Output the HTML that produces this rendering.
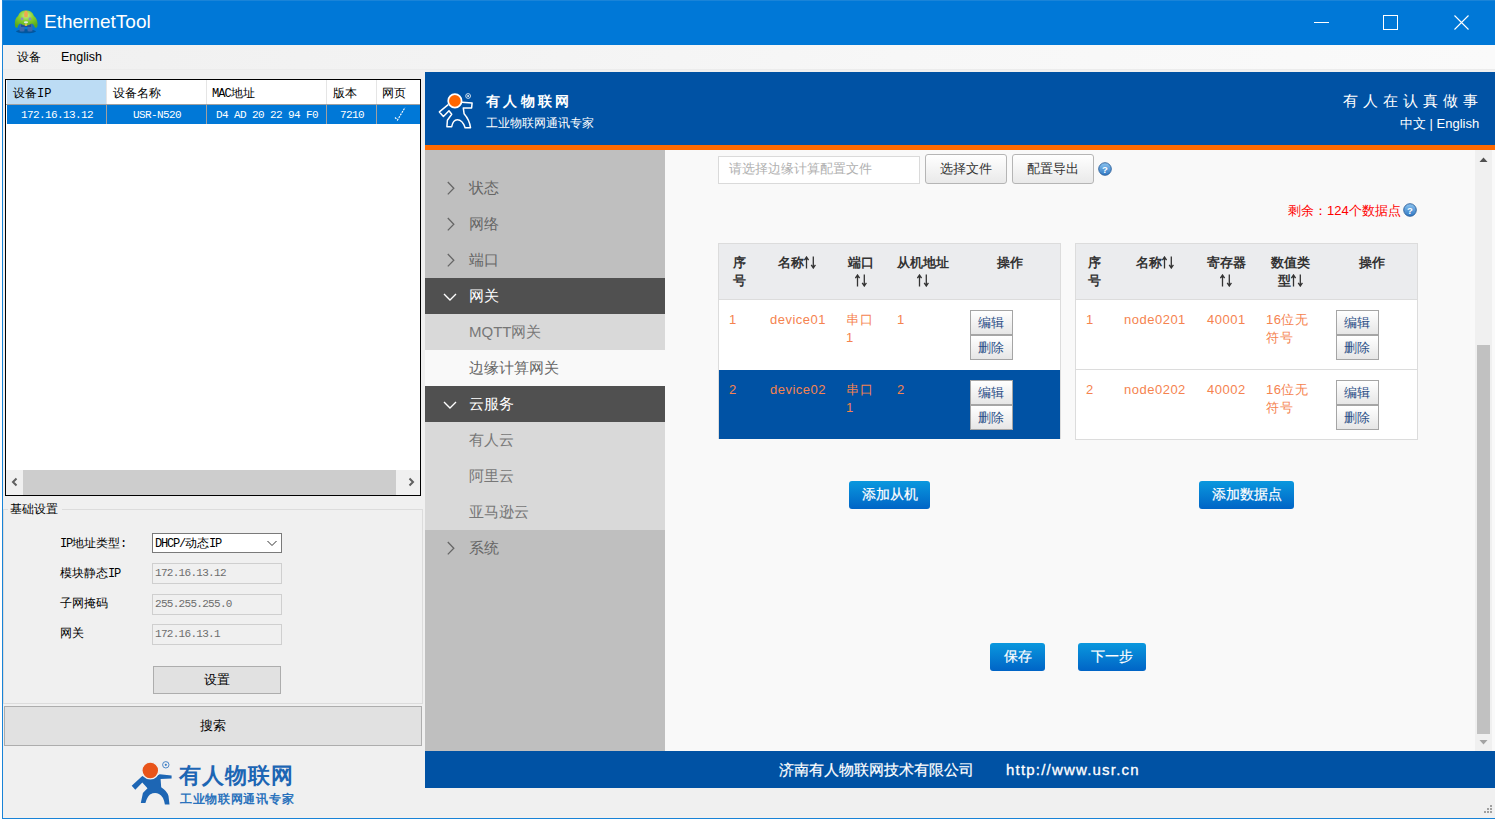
<!DOCTYPE html>
<html><head><meta charset="utf-8">
<style>
*{margin:0;padding:0;box-sizing:border-box}
html,body{width:1495px;height:820px;overflow:hidden;background:#fff;font-family:"Liberation Sans",sans-serif}
.a{position:absolute}
.t{position:absolute;white-space:nowrap}
#win{position:absolute;left:2px;top:0;width:1493px;height:819px;background:#f0f0f0;border-left:1px solid #1883d7;border-bottom:1px solid #1883d7}
#title{position:absolute;left:2px;top:0;width:1493px;height:45px;background:#0078d7;border-top:1px solid #1a84d8;border-left:1px solid #1a84d8}
#menu{position:absolute;left:3px;top:45px;width:1492px;height:25px;background:linear-gradient(90deg,#f0f0f0 0%,#f3f3f3 30%,#f7f7f7 60%,#fafafa 100%);border-bottom:1px solid #ececec}
.mono{font-family:"Liberation Mono",monospace}
#list{position:absolute;left:5px;top:79px;width:416px;height:417px;border:1px solid #000;background:#fff}
.hd{position:absolute;top:1px;height:24px;font-size:12px;line-height:24px;color:#000;white-space:nowrap}
.sep{position:absolute;top:0;width:1px;height:24px;background:#e5e5e5}
.rw{position:absolute;top:26px;height:19px;color:#fff;font-size:11px;letter-spacing:-.6px;line-height:19px;text-align:center;font-family:"Liberation Mono",monospace;white-space:nowrap}
#hdr{position:absolute;left:425px;top:72px;width:1070px;height:73px;background:#0052a4}
#orange{position:absolute;left:425px;top:145px;width:1070px;height:5px;background:#ff6a00}
#side{position:absolute;left:425px;top:150px;width:240px;height:601px;background:#bfbfbf}
#content{position:absolute;left:665px;top:150px;width:830px;height:601px;background:#f9f9f9}
#footer{position:absolute;left:425px;top:751px;width:1070px;height:37px;background:#0052a4}
.mi{position:absolute;left:425px;width:240px;height:36px;font-size:15px;line-height:36px;color:#666;white-space:nowrap}
.mi .txt{position:absolute;left:44px;top:0}
.mi.dark{background:#505050;color:#fff}
.mi.sub{background:#d9d9d9;color:#777}
.mi.sel{background:#f9f9f9;color:#666}
.mi svg{position:absolute;left:0;top:0}
.btnw{position:absolute;border:1px solid #b5b5b5;border-radius:3px;background:linear-gradient(#ffffff,#e9e9e9);font-size:13px;color:#333;text-align:center;white-space:nowrap}
.bluebtn{position:absolute;border-radius:3px;background:linear-gradient(#0a98de,#0064c6);color:#fff;font-size:13.5px;-webkit-text-stroke:.2px #fff;text-align:center;white-space:nowrap}
.tbl{position:absolute;border:1px solid #dcdcdc;background:#fff}
.th{position:absolute;font-size:13px;font-weight:bold;color:#333;line-height:18px;white-space:nowrap}
.td{position:absolute;font-size:13px;color:#f5834f;line-height:18px;margin-top:1px;letter-spacing:.5px;white-space:nowrap}
.eb{position:absolute;width:43px;height:25px;border:1px solid #a5a5a5;background:linear-gradient(#ffffff,#e6e6e6);font-size:13px;color:#2b4f87;text-align:center;line-height:23px;padding-right:2px;white-space:nowrap}
.lbl{position:absolute;font-size:12px;line-height:16px;color:#000;white-space:nowrap}
.lbl .mono,.cmb .mono{letter-spacing:-1.2px}
.tb{position:absolute;left:152px;width:130px;height:21px;border:1px solid #cfcfcf;background:#f0f0f0;font-family:"Liberation Mono",monospace;font-size:11px;letter-spacing:-.7px;color:#6d6d6d;line-height:19px;padding-left:2px;white-space:nowrap}
.wbtn{position:absolute;border:1px solid #adadad;background:#e1e1e1;font-size:13px;color:#000;text-align:center;white-space:nowrap}
.arr{display:inline-block;vertical-align:-2px}
</style></head><body>
<div id="win"></div>
<div id="title"></div>
<!-- title icon -->
<svg class="a" style="left:0;top:0" width="44" height="40" viewBox="0 0 44 40">
  <defs><radialGradient id="g1" cx="50%" cy="30%" r="70%"><stop offset="0" stop-color="#c8f090"/><stop offset=".45" stop-color="#86d030"/><stop offset="1" stop-color="#58a81c"/></radialGradient><filter id="bl"><feGaussianBlur stdDeviation=".45"/></filter></defs>
  <g filter="url(#bl)">
  <ellipse cx="26" cy="31.3" rx="10" ry="2" fill="#0a3f7a" opacity=".6"/>
  <rect x="19.5" y="22" width="5" height="9.5" rx="1.5" fill="#3a6aae"/>
  <rect x="27.5" y="22" width="5" height="9.5" rx="1.5" fill="#3a6aae"/>
  <rect x="21" y="21" width="10" height="6" fill="#24509a"/>
  <path d="M15 26 Q14 19 18 16 Q20 10.5 26 10.3 Q32 10.5 34 16 Q38 19 37.5 26 Q37 28.5 35 27.5 Q33.5 24 32 23.5 Q29 25.5 26 25.5 Q23 25.5 20 23.5 Q18.5 24 17.5 27.5 Q15.5 28.5 15 26Z" fill="url(#g1)"/>
  <path d="M24.9 11 L27.1 11 Q28.6 14 27.6 17.2 L24.4 17.2 Q23.4 14 24.9 11Z" fill="#f0a850"/>
  <circle cx="22" cy="19" r="1.4" fill="#8890c0"/><circle cx="30" cy="19" r="1.4" fill="#8890c0"/>
  <ellipse cx="26" cy="22.3" rx="2.2" ry="1.1" fill="#e0e8dc"/>
  <ellipse cx="26" cy="25" rx="1.3" ry="1" fill="#e8c040"/>
  </g>
</svg>
<div class="t" id="ttl" style="left:44px;top:10px;font-size:19px;color:#fff;line-height:24px">EthernetTool</div>
<!-- window buttons -->
<svg class="a" style="left:1300px;top:0" width="195" height="45" viewBox="0 0 195 45">
  <rect x="14" y="22" width="15" height="1" fill="#fff"/>
  <rect x="83.5" y="15.5" width="14" height="14" fill="none" stroke="#fff" stroke-width="1"/>
  <path d="M154.5 15.5 L168.5 29.5 M168.5 15.5 L154.5 29.5" stroke="#fff" stroke-width="1.1"/>
</svg>
<div id="menu"></div>
<div class="t" style="left:17px;top:48px;font-size:12px;line-height:18px;color:#000">设备</div>
<div class="t" id="eng" style="left:61px;top:48px;font-size:12.5px;line-height:18px;color:#000">English</div>

<!-- list view -->
<div id="list">
  <div class="a" style="left:1px;top:0;width:100px;height:24px;background:#bcdcf4"></div>
  <div class="hd" style="left:7px">设备<span class="mono" style="font-size:12px">IP</span></div>
  <div class="sep" style="left:100px"></div>
  <div class="hd" style="left:107px">设备名称</div>
  <div class="sep" style="left:200px"></div>
  <div class="hd" style="left:206px"><span class="mono" style="font-size:12px;letter-spacing:-1px">MAC</span>地址</div>
  <div class="sep" style="left:320px"></div>
  <div class="hd" style="left:327px">版本</div>
  <div class="sep" style="left:370px"></div>
  <div class="hd" style="left:376px">网页</div>
  <div class="a" style="left:0;top:24px;width:414px;height:1px;background:#a0a0a0"></div>
  <div class="a" style="left:1px;top:25px;width:413px;height:19px;background:#0078d7"></div>
  <div class="rw" style="left:1px;width:100px">172.16.13.12</div>
  <div class="a" style="left:100px;top:25px;width:1px;height:19px;background:#a0a0a0"></div>
  <div class="rw" style="left:101px;width:100px">USR-N520</div>
  <div class="a" style="left:200px;top:25px;width:1px;height:19px;background:#a0a0a0"></div>
  <div class="rw" style="left:201px;width:120px">D4 AD 20 22 94 F0</div>
  <div class="a" style="left:320px;top:25px;width:1px;height:19px;background:#a0a0a0"></div>
  <div class="rw" style="left:321px;width:50px">7210</div>
  <div class="a" style="left:370px;top:25px;width:1px;height:19px;background:#a0a0a0"></div>
  <svg class="a" style="left:388px;top:26px" width="14" height="16" viewBox="0 0 14 16"><path d="M1 11.5 L3.5 14 L11 1.5" fill="none" stroke="#fff" stroke-width="1.1" stroke-dasharray="2 1"/></svg>
  <!-- h scrollbar -->
  <div class="a" style="left:0;top:390px;width:414px;height:25px;background:#f0f0f0"></div>
  <div class="a" style="left:17px;top:390px;width:373px;height:25px;background:#cdcdcd"></div>
  <svg class="a" style="left:4px;top:397px" width="10" height="10" viewBox="0 0 10 10"><path d="M6.5 1.5 L3 5 L6.5 8.5" fill="none" stroke="#606060" stroke-width="2"/></svg>
  <svg class="a" style="left:400px;top:397px" width="10" height="10" viewBox="0 0 10 10"><path d="M3.5 1.5 L7 5 L3.5 8.5" fill="none" stroke="#606060" stroke-width="2"/></svg>
</div>
<!-- group box -->
<div class="a" style="left:3px;top:509px;width:420px;height:195px;border:1px solid #dcdcdc;border-top-color:#dcdcdc"></div>
<div class="a" style="left:8px;top:503px;width:54px;height:12px;background:#f0f0f0"></div>
<div class="lbl" id="jc" style="left:10px;top:501px;font-size:12px">基础设置</div>
<div class="lbl" style="left:60px;top:535px"><span class="mono">IP</span>地址类型<span class="mono">:</span></div>
<div class="lbl" style="left:60px;top:565px">模块静态<span class="mono">IP</span></div>
<div class="lbl" style="left:60px;top:595px">子网掩码</div>
<div class="lbl" style="left:60px;top:625px">网关</div>
<div class="a" style="left:152px;top:533px;width:130px;height:20px;border:1px solid #7a7a7a;background:#fff"></div>
<div class="t cmb" style="left:155px;top:535px;font-size:12px;line-height:16px;color:#000"><span class="mono">DHCP/</span>动态<span class="mono">IP</span></div>
<svg class="a" style="left:266px;top:538px" width="12" height="10" viewBox="0 0 12 10"><path d="M1.5 3 L6 7.5 L10.5 3" fill="none" stroke="#333" stroke-width="1"/></svg>
<div class="tb" style="top:563px">172.16.13.12</div>
<div class="tb" style="top:594px">255.255.255.0</div>
<div class="tb" style="top:624px">172.16.13.1</div>
<div class="wbtn" style="left:153px;top:666px;width:128px;height:28px;line-height:26px">设置</div>
<div class="wbtn" style="left:4px;top:706px;width:418px;height:40px;line-height:38px">搜索</div>
<!-- bottom-left logo -->
<svg class="a" style="left:128px;top:758px" width="50" height="50" viewBox="0 0 50 50">
  <path d="M3.7 27.7 L14.3 18 Q22 22 31.7 16.2 L43.6 17.4 L43.6 20.4 L32.6 21 L33.2 29.3 Q39 33 40.5 38 L41.5 46.6 L36.9 46.6 Q35.5 38 31 36 Q26.8 34 22 36.5 Q19 39 17.4 45.1 L12.8 45.1 L14.9 35.1 L19.5 30.2 L14.3 24.4 L7.3 31.7 Z" fill="#1d66b4"/>
  <circle cx="22.3" cy="12.5" r="8.4" fill="#e8541a" stroke="#f0f0f0" stroke-width="1.3"/>
  <circle cx="37.8" cy="6.8" r="3.2" fill="none" stroke="#3a7cc4" stroke-width=".9"/>
  <circle cx="37.8" cy="6.8" r="1.1" fill="#3a7cc4"/>
</svg>
<div class="t" id="lg1" style="left:179px;top:762px;font-size:22px;font-weight:bold;color:#1d66b4;line-height:28px;letter-spacing:1px">有人物联网</div>
<div class="t" id="lg2" style="left:180px;top:791px;font-size:12px;font-weight:bold;color:#2a72bc;line-height:16px;letter-spacing:.7px">工业物联网通讯专家</div>
<div id="hdr"></div>
<div id="orange"></div>
<div id="side"></div>
<div id="content"></div>
<div id="footer"></div>
<!-- header logo -->
<svg class="a" style="left:434px;top:88px" width="40" height="44" viewBox="0 0 40 44">
  <path d="M14.2 16.6 L5.4 23.9 L9.4 28.5 L15 22.8 L17.7 26.3 L13.4 32.2 L12.9 38.7 L17.7 38.7 Q19 31.7 23.3 31.7 Q28.5 31.7 31.1 39.7 L36.5 39.7 Q35.5 32 30.1 25.8 L29.3 19.9 L37.6 19.9 L38.1 15 L27.9 14.2" fill="none" stroke="#fff" stroke-width="1.5" stroke-linejoin="round"/>
  <circle cx="20.9" cy="12.9" r="6.7" fill="#ff6600" stroke="#fff" stroke-width="1.7"/>
  <circle cx="34.1" cy="8" r="2.4" fill="none" stroke="#fff" stroke-width=".8"/>
  <circle cx="34.1" cy="8" r=".9" fill="#fff"/>
</svg>
<div class="t" id="h1" style="left:486px;top:92px;font-size:14px;font-weight:bold;color:#fff;line-height:18px;letter-spacing:3.3px">有人物联网</div>
<div class="t" id="h2" style="left:486px;top:115px;font-size:12px;color:#fff;line-height:16px">工业物联网通讯专家</div>
<div class="t" id="h3" style="left:1343px;top:92px;font-size:15px;color:#fff;line-height:18px;letter-spacing:5px">有人在认真做事</div>
<div class="t" id="h4" style="left:1400px;top:116px;font-size:13px;color:#fff;line-height:16px">中文 | English</div>
<!-- sidebar menu -->
<div class="mi" style="top:170px"><svg width="30" height="36"><path d="M22.8 12 L28.8 18.2 L22.8 24.4" fill="none" stroke="#666" stroke-width="1.3"/></svg><span class="txt">状态</span></div>
<div class="mi" style="top:206px"><svg width="30" height="36"><path d="M22.8 12 L28.8 18.2 L22.8 24.4" fill="none" stroke="#666" stroke-width="1.3"/></svg><span class="txt">网络</span></div>
<div class="mi" style="top:242px"><svg width="30" height="36"><path d="M22.8 12 L28.8 18.2 L22.8 24.4" fill="none" stroke="#666" stroke-width="1.3"/></svg><span class="txt">端口</span></div>
<div class="mi dark" style="top:278px"><svg width="40" height="36"><path d="M19 16 L25 22 L31 16" fill="none" stroke="#fff" stroke-width="1.4"/></svg><span class="txt">网关</span></div>
<div class="mi sub" style="top:314px"><span class="txt">MQTT网关</span></div>
<div class="mi sel" style="top:350px"><span class="txt">边缘计算网关</span></div>
<div class="mi dark" style="top:386px"><svg width="40" height="36"><path d="M19 16 L25 22 L31 16" fill="none" stroke="#fff" stroke-width="1.4"/></svg><span class="txt">云服务</span></div>
<div class="mi sub" style="top:422px"><span class="txt">有人云</span></div>
<div class="mi sub" style="top:458px"><span class="txt">阿里云</span></div>
<div class="mi sub" style="top:494px"><span class="txt">亚马逊云</span></div>
<div class="mi" style="top:530px"><svg width="30" height="36"><path d="M22.8 12 L28.8 18.2 L22.8 24.4" fill="none" stroke="#666" stroke-width="1.3"/></svg><span class="txt">系统</span></div>
<!-- content top controls -->
<div class="a" style="left:718px;top:156px;width:202px;height:28px;border:1px solid #dadada;background:#fff"></div>
<div class="t" id="ph" style="left:729px;top:160px;font-size:13px;line-height:17px;color:#b0b0b0">请选择边缘计算配置文件</div>
<div class="btnw" style="left:925px;top:154px;width:82px;height:30px;line-height:27px">选择文件</div>
<div class="btnw" style="left:1012px;top:154px;width:82px;height:30px;line-height:27px">配置导出</div>
<svg class="a" style="left:1098px;top:162px" width="14" height="14" viewBox="0 0 14 14"><defs><linearGradient id="qg" x1="0" y1="0" x2="0" y2="1"><stop offset="0" stop-color="#8cc4f0"/><stop offset="1" stop-color="#2f78c4"/></linearGradient></defs><circle cx="7" cy="7" r="6.3" fill="url(#qg)" stroke="#2d5f99" stroke-width=".9"/><text x="7" y="10.6" font-size="9.5" font-weight="bold" text-anchor="middle" fill="#fff" font-family="Liberation Sans">?</text></svg>
<div class="t" id="rem" style="left:1288px;top:202px;font-size:13px;line-height:17px;color:#ff0000">剩余：124个数据点</div>
<svg class="a" style="left:1403px;top:203px" width="14" height="14" viewBox="0 0 14 14"><circle cx="7" cy="7" r="6.3" fill="url(#qg)" stroke="#2d5f99" stroke-width=".9"/><text x="7" y="10.6" font-size="9.5" font-weight="bold" text-anchor="middle" fill="#fff" font-family="Liberation Sans">?</text></svg>

<!-- left table -->
<div class="tbl" style="left:718px;top:243px;width:343px;height:196px"></div>
<div class="a" style="left:719px;top:244px;width:341px;height:56px;background:#ebecee;border-bottom:1px solid #dcdcdc"></div>
<div class="th" style="left:733px;top:254px">序<br>号</div>
<div class="th" style="left:778px;top:254px">名称<svg class="arr" width="13" height="13" viewBox="0 0 13 13"><path d="M2.5 1.5V12.5M0.4 4.2L2.5 1L4.6 4.2M9.3 0.5V11.5M7.2 8.8L9.3 12L11.4 8.8" fill="none" stroke="#333" stroke-width="1.3"/></svg></div>
<div class="th" style="left:848px;top:254px;text-align:center">端口<br><svg class="arr" width="13" height="13" viewBox="0 0 13 13"><path d="M2.5 1.5V12.5M0.4 4.2L2.5 1L4.6 4.2M9.3 0.5V11.5M7.2 8.8L9.3 12L11.4 8.8" fill="none" stroke="#333" stroke-width="1.3"/></svg></div>
<div class="th" style="left:897px;top:254px;text-align:center">从机地址<br><svg class="arr" width="13" height="13" viewBox="0 0 13 13"><path d="M2.5 1.5V12.5M0.4 4.2L2.5 1L4.6 4.2M9.3 0.5V11.5M7.2 8.8L9.3 12L11.4 8.8" fill="none" stroke="#333" stroke-width="1.3"/></svg></div>
<div class="th" style="left:997px;top:254px">操作</div>
<div class="a" style="left:719px;top:370px;width:341px;height:69px;background:#0052a4"></div>
<div class="td" style="left:729px;top:310px">1</div>
<div class="td" style="left:770px;top:310px">device01</div>
<div class="td" style="left:846px;top:310px">串口<br>1</div>
<div class="td" style="left:897px;top:310px">1</div>
<div class="eb" style="left:970px;top:310px">编辑</div>
<div class="eb" style="left:970px;top:335px">删除</div>
<div class="td" style="left:729px;top:380px">2</div>
<div class="td" style="left:770px;top:380px">device02</div>
<div class="td" style="left:846px;top:380px">串口<br>1</div>
<div class="td" style="left:897px;top:380px">2</div>
<div class="eb" style="left:970px;top:380px">编辑</div>
<div class="eb" style="left:970px;top:405px">删除</div>

<!-- right table -->
<div class="tbl" style="left:1075px;top:243px;width:343px;height:197px"></div>
<div class="a" style="left:1076px;top:244px;width:341px;height:56px;background:#ebecee;border-bottom:1px solid #dcdcdc"></div>
<div class="th" style="left:1088px;top:254px">序<br>号</div>
<div class="th" style="left:1136px;top:254px">名称<svg class="arr" width="13" height="13" viewBox="0 0 13 13"><path d="M2.5 1.5V12.5M0.4 4.2L2.5 1L4.6 4.2M9.3 0.5V11.5M7.2 8.8L9.3 12L11.4 8.8" fill="none" stroke="#333" stroke-width="1.3"/></svg></div>
<div class="th" style="left:1207px;top:254px;text-align:center">寄存器<br><svg class="arr" width="13" height="13" viewBox="0 0 13 13"><path d="M2.5 1.5V12.5M0.4 4.2L2.5 1L4.6 4.2M9.3 0.5V11.5M7.2 8.8L9.3 12L11.4 8.8" fill="none" stroke="#333" stroke-width="1.3"/></svg></div>
<div class="th" style="left:1271px;top:254px;text-align:center">数值类<br>型<svg class="arr" width="13" height="13" viewBox="0 0 13 13"><path d="M2.5 1.5V12.5M0.4 4.2L2.5 1L4.6 4.2M9.3 0.5V11.5M7.2 8.8L9.3 12L11.4 8.8" fill="none" stroke="#333" stroke-width="1.3"/></svg></div>
<div class="th" style="left:1359px;top:254px">操作</div>
<div class="a" style="left:1076px;top:369px;width:341px;height:1px;background:#dcdcdc"></div>
<div class="td" style="left:1086px;top:310px">1</div>
<div class="td" style="left:1124px;top:310px">node0201</div>
<div class="td" style="left:1207px;top:310px">40001</div>
<div class="td" style="left:1266px;top:310px">16位无<br>符号</div>
<div class="eb" style="left:1336px;top:310px">编辑</div>
<div class="eb" style="left:1336px;top:335px">删除</div>
<div class="td" style="left:1086px;top:380px">2</div>
<div class="td" style="left:1124px;top:380px">node0202</div>
<div class="td" style="left:1207px;top:380px">40002</div>
<div class="td" style="left:1266px;top:380px">16位无<br>符号</div>
<div class="eb" style="left:1336px;top:380px">编辑</div>
<div class="eb" style="left:1336px;top:405px">删除</div>

<!-- blue buttons -->
<div class="bluebtn" style="left:849px;top:481px;width:81px;height:28px;line-height:28px">添加从机</div>
<div class="bluebtn" style="left:1199px;top:481px;width:95px;height:28px;line-height:28px">添加数据点</div>
<div class="bluebtn" style="left:990px;top:643px;width:55px;height:28px;line-height:28px">保存</div>
<div class="bluebtn" style="left:1078px;top:643px;width:68px;height:28px;line-height:28px">下一步</div>

<!-- scrollbar -->
<div class="a" style="left:1475px;top:150px;width:17px;height:601px;background:#f0f0f0"></div>
<div class="a" style="left:1477px;top:345px;width:13px;height:389px;background:#c1c1c1"></div>
<svg class="a" style="left:1475px;top:152px" width="17" height="14" viewBox="0 0 17 14"><path d="M4.5 10 L8.5 5.5 L12.5 10Z" fill="#505050"/></svg>
<svg class="a" style="left:1475px;top:736px" width="17" height="14" viewBox="0 0 17 14"><path d="M4.5 4 L8.5 8.5 L12.5 4Z" fill="#a3a3a3"/></svg>
<div class="a" style="left:1492px;top:150px;width:3px;height:601px;background:#f9f9f9"></div>

<!-- footer text -->
<div class="t" id="ft1" style="left:779px;top:760px;font-size:15px;color:#fff;line-height:20px;-webkit-text-stroke:.2px #fff">济南有人物联网技术有限公司</div>
<div class="t" id="ft2" style="left:1006px;top:760px;font-size:15px;color:#fff;line-height:20px;letter-spacing:1.2px;-webkit-text-stroke:.3px #fff">http://www.usr.cn</div>

<!-- resize grip -->
<svg class="a" style="left:1480px;top:803px" width="14" height="14" viewBox="0 0 14 14"><g fill="#a0a0a0"><rect x="10" y="2" width="2" height="2"/><rect x="7" y="5" width="2" height="2"/><rect x="10" y="5" width="2" height="2"/><rect x="4" y="8" width="2" height="2"/><rect x="7" y="8" width="2" height="2"/><rect x="10" y="8" width="2" height="2"/></g></svg>
</body></html>
